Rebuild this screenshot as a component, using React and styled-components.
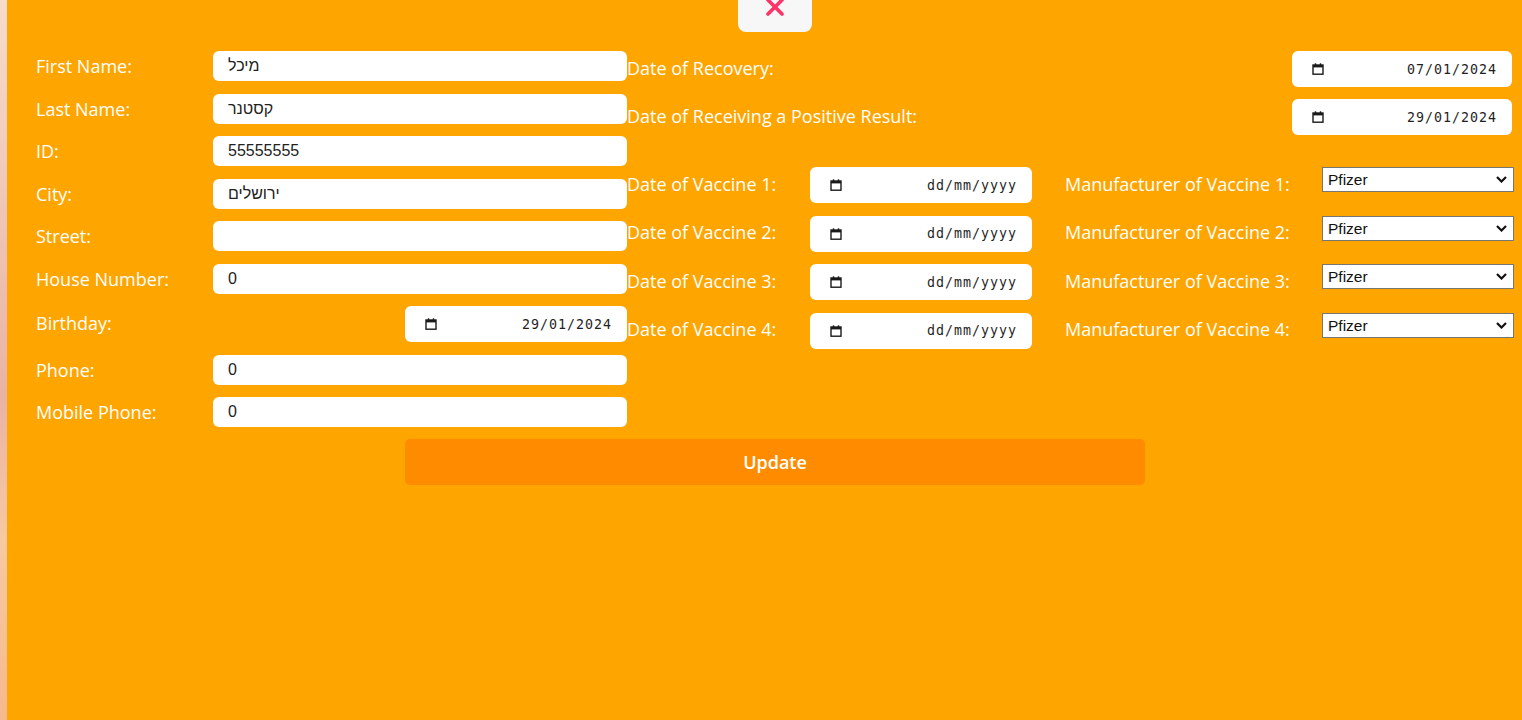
import React from 'react'
import styled, { createGlobalStyle } from 'styled-components'

const GlobalStyle = createGlobalStyle`
  html, body {
    margin: 0;
    height: 100%;
  }
  body {
    background: linear-gradient(180deg, #f7dccb 0%, #eec2b2 35%, #e9b3a4 55%, #f8c9a2 75%, #f6b98c 100%);
    font-family: 'Open Sans', 'Noto Sans', sans-serif;
  }
`

const Page = styled.div`
  display: flex;
  height: 720px;
  padding-left: 7px;
`

const Panel = styled.div`
  flex: 1;
  background: #ffa500;
  padding: 0 8px 0 29px;
  overflow: hidden;
`

const TopBar = styled.div`
  display: flex;
  justify-content: center;
  margin-bottom: 19px;
`

const CloseButton = styled.button`
  width: 74px;
  height: 32px;
  border: none;
  padding: 0;
  background: #f7f7f7;
  border-radius: 0 0 8px 8px;
  display: flex;
  justify-content: center;
  align-items: flex-start;
  overflow: hidden;
  cursor: pointer;
  svg {
    margin-top: -3px;
  }
`

const FormGrid = styled.div`
  display: grid;
  grid-template-columns: 591px 1fr;
`

const Column = styled.div`
  display: flex;
  flex-direction: column;
  gap: ${(p) => p.$gap || 12.5}px;
`

const Row = styled.div`
  display: flex;
  align-items: center;
  justify-content: space-between;
  min-height: 30px;
`

const Label = styled.label`
  color: #fff;
  font-size: 18px;
  line-height: 22px;
  flex-shrink: 0;
  margin-top: ${(p) => p.$lift || 0}px;
  width: ${(p) => (p.$width ? `${p.$width}px` : 'auto')};
  margin-left: ${(p) => p.$offset || 0}px;
`

const TextInput = styled.input`
  width: 414px;
  height: 30px;
  box-sizing: border-box;
  border: none;
  border-radius: 6px;
  background: #fff;
  padding: 0 15px;
  font-family: 'Liberation Sans', Arial, sans-serif;
  font-size: 16px;
  color: #222;
  outline: none;
`

const DateBox = styled.div`
  width: ${(p) => p.$width || 222}px;
  height: 36px;
  box-sizing: border-box;
  margin-right: ${(p) => p.$right || 0}px;
  border-radius: 6px;
  background: #fff;
  display: flex;
  align-items: center;
  justify-content: space-between;
  padding: 0 15px 0 20px;
`

const DateText = styled.span`
  font-family: 'DejaVu Sans Mono', 'Liberation Mono', monospace;
  font-size: 13.3px;
  letter-spacing: 1px;
  color: #1f1f1f;
`

const Section = styled.div`
  display: flex;
  flex-direction: column;
  gap: 12.5px;
  margin-top: 20px;
`

const VaccineRow = styled.div`
  display: flex;
  align-items: center;
  height: 36px;
`

const SelectWrap = styled.div`
  position: relative;
  align-self: flex-start;
  width: 192px;
  height: 25px;
  svg {
    position: absolute;
    right: 7px;
    top: 9px;
    pointer-events: none;
  }
`

const Select = styled.select`
  appearance: none;
  width: 100%;
  height: 100%;
  box-sizing: border-box;
  border: 1px solid #767676;
  border-radius: 0;
  background: #fff;
  font-family: 'Liberation Sans', Arial, sans-serif;
  font-size: 15.5px;
  color: #111;
  padding: 0 20px 0 5px;
  outline: none;
`

const UpdateButton = styled.button`
  display: block;
  width: 740px;
  height: 46px;
  margin: 12px auto 0;
  border: none;
  border-radius: 5px;
  background: #ff8c00;
  color: #fff;
  font-family: 'Open Sans', 'Noto Sans', sans-serif;
  font-weight: 600;
  font-size: 18px;
  cursor: pointer;
`

function CalendarIcon() {
  return (
    <svg width="12" height="12" viewBox="0 0 12 12">
      <rect x="1" y="2" width="10" height="9.2" fill="none" stroke="#1a1a1a" strokeWidth="1.4" />
      <rect x="1" y="2" width="10" height="2.4" fill="#1a1a1a" />
      <rect x="2.8" y="0.3" width="1.4" height="2.2" fill="#1a1a1a" />
      <rect x="7.8" y="0.3" width="1.4" height="2.2" fill="#1a1a1a" />
    </svg>
  )
}

function DateField({ value, width, right }) {
  return (
    <DateBox $width={width} $right={right}>
      <CalendarIcon />
      <DateText>{value || 'dd/mm/yyyy'}</DateText>
    </DateBox>
  )
}

function ManufacturerSelect() {
  return (
    <SelectWrap>
      <Select defaultValue="Pfizer">
        <option>Pfizer</option>
        <option>Moderna</option>
        <option>AstraZeneca</option>
      </Select>
      <svg width="11" height="7" viewBox="0 0 11 7">
        <path d="M1 1 L5.5 5.5 L10 1" fill="none" stroke="#111" strokeWidth="2.2" />
      </svg>
    </SelectWrap>
  )
}

const personal = [
  ['First Name:', 'מיכל'],
  ['Last Name:', 'קסטנר'],
  ['ID:', '55555555'],
  ['City:', 'ירושלים'],
  ['Street:', ''],
  ['House Number:', '0'],
]

function App() {
  return (
    <>
      <GlobalStyle />
      <Page>
        <Panel>
          <TopBar>
            <CloseButton aria-label="close">
              <svg width="20" height="20" viewBox="0 0 20 20">
                <path d="M3 3 L17 17 M17 3 L3 17" stroke="#fc3468" strokeWidth="3.6" strokeLinecap="round" />
              </svg>
            </CloseButton>
          </TopBar>

          <FormGrid>
            <Column>
              {personal.map(([label, value]) => (
                <Row key={label}>
                  <Label>{label}</Label>
                  <TextInput defaultValue={value} />
                </Row>
              ))}
              <Row>
                <Label $lift={-2}>Birthday:</Label>
                <DateField value="29/01/2024" />
              </Row>
              <Row>
                <Label>Phone:</Label>
                <TextInput defaultValue="0" />
              </Row>
              <Row>
                <Label>Mobile Phone:</Label>
                <TextInput defaultValue="0" />
              </Row>
            </Column>

            <Column $gap={12}>
              <Row>
                <Label $lift={-3}>Date of Recovery:</Label>
                <DateField value="07/01/2024" width={220} right={2} />
              </Row>
              <Row>
                <Label $lift={-3}>Date of Receiving a Positive Result:</Label>
                <DateField value="29/01/2024" width={220} right={2} />
              </Row>
              <Section>
                {[1, 2, 3, 4].map((n) => (
                  <VaccineRow key={n}>
                    <Label $width={183} $lift={-3}>Date of Vaccine {n}:</Label>
                    <DateField />
                    <Label $width={257} $offset={33} $lift={-3}>Manufacturer of Vaccine {n}:</Label>
                    <ManufacturerSelect />
                  </VaccineRow>
                ))}
              </Section>
            </Column>
          </FormGrid>

          <UpdateButton>Update</UpdateButton>
        </Panel>
      </Page>
    </>
  )
}

export default App
